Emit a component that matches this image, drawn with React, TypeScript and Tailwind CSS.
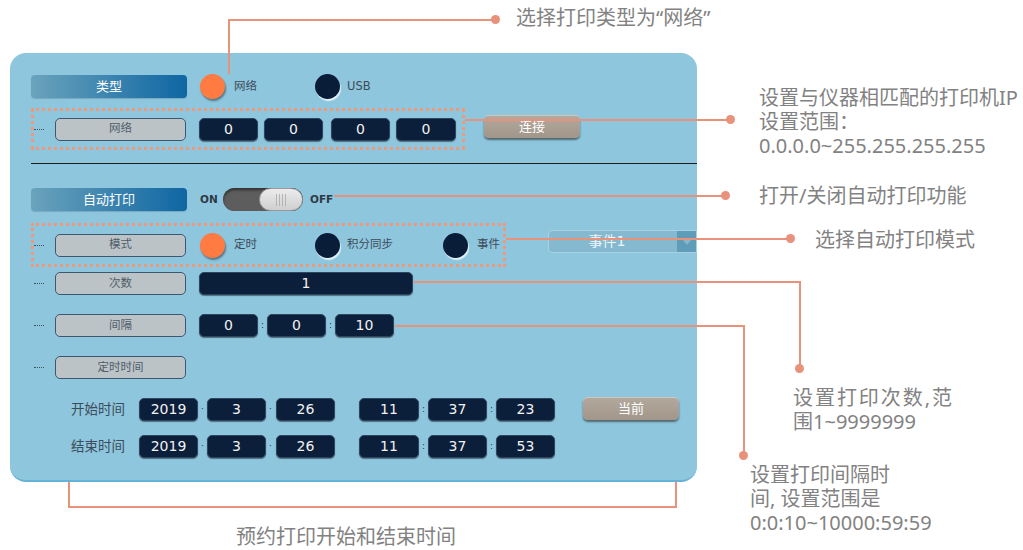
import React from "react";

const panelFont = "font-['DejaVu_Sans','Noto_Sans_CJK_SC',sans-serif]";
const noteFont = "font-['Noto_Sans','Noto_Sans_CJK_SC',sans-serif]";

function HeadPill({ children }: { children: React.ReactNode }) {
  return (
    <div className="w-[156px] h-[23px] rounded-[4px] bg-[linear-gradient(90deg,#6aa3bc,#0f66a3)] flex items-center justify-center text-white text-[13px] shadow-[0_1px_1px_rgba(0,0,0,0.15)]">
      {children}
    </div>
  );
}

function Pill({ children }: { children: React.ReactNode }) {
  return (
    <div className="w-[131px] h-[23px] shrink-0 rounded-[5px] bg-[#bcc3c7] border-[1.5px] border-[#3d5770] flex items-center justify-center text-[11.5px] text-[#4f5d6a]">
      {children}
    </div>
  );
}

function Dash() {
  return <div className="w-[10px] h-0 border-t border-dotted border-[#40505e] shrink-0" />;
}

function Box({ w, children }: { w: string; children: React.ReactNode }) {
  return (
    <div
      className={`${w} h-[23px] shrink-0 rounded-[5px] bg-[#0b1e3a] border border-[#2e4560] shadow-[0_1px_1px_rgba(0,0,0,0.45)] flex items-center justify-center text-[#f2f2f2] text-[14px]`}
    >
      {children}
    </div>
  );
}

function Orange() {
  return <div className="w-[25px] h-[25px] rounded-full bg-[#ff7b42] shrink-0 shadow-[1px_2px_2px_rgba(0,0,0,0.4)]" />;
}

function Navy() {
  return <div className="w-[25px] h-[25px] rounded-full bg-[#0a1d38] shrink-0 shadow-[1px_2px_1px_rgba(235,245,250,0.9)]" />;
}

function Taupe({ children }: { children: React.ReactNode }) {
  return (
    <div className="w-[96px] h-[23px] rounded-[5px] bg-[linear-gradient(180deg,#b3a89d,#a2968a)] border-t border-[#cfc6bc] shadow-[0_2px_2px_rgba(40,40,40,0.6)] flex items-center justify-center text-white text-[13px]">
      {children}
    </div>
  );
}

function Sep({ c }: { c: string }) {
  return (
    <div className="w-[9px] shrink-0 flex items-center justify-center text-[9px] text-[#23384d] leading-none">
      {c}
    </div>
  );
}

function DateRow({ label, s }: { label: string; s: string }) {
  return (
    <div className="flex items-center h-[24px]">
      <div className="ml-[40px] w-[68px] text-[13.5px] text-[#3c4c5a]">{label}</div>
      <Box w="w-[59px]">2019</Box>
      <Sep c="·" />
      <Box w="w-[59px]">3</Box>
      <Sep c="·" />
      <div className="w-[1px]" />
      <Box w="w-[59px]">26</Box>
      <div className="w-[24px]" />
      <Box w="w-[60px]">11</Box>
      <Sep c=":" />
      <Box w="w-[59px]">37</Box>
      <Sep c=":" />
      <Box w="w-[59px]">{s}</Box>
    </div>
  );
}

function Line({ className }: { className: string }) {
  return <div className={`absolute bg-[#e8917b] ${className}`} />;
}

function Dot({ className }: { className: string }) {
  return <div className={`absolute w-[9px] h-[9px] rounded-full bg-[#e8917b] ${className}`} />;
}

export default function App() {
  return (
    <div className="relative w-[1023px] h-[550px] bg-white overflow-hidden">
      <div className="pt-[53px] pl-[10px]">
        <div
          className={`${panelFont} w-[687px] h-[429px] rounded-[16px] bg-[#8ec6de] border-b-2 border-[#66b1d8] pl-[21px] pt-[22px] overflow-hidden`}
        >
          {/* Type row */}
          <div className="flex items-center h-[23px]">
            <HeadPill>类型</HeadPill>
            <div className="ml-[13px] w-[115px] flex items-center">
              <Orange />
              <span className="ml-[9px] text-[11.5px] text-[#3d4b58]">网络</span>
            </div>
            <Navy />
            <span className="ml-[7px] text-[11.5px] text-[#3d4b58]">USB</span>
          </div>

          {/* IP row */}
          <div className="flex items-center mt-[10px]">
            <div className="w-[434px] h-[42px] border-[3px] border-dotted border-[#f0987c] flex items-center">
              <Dash />
              <div className="ml-[11px]">
                <Pill>网络</Pill>
              </div>
              <div className="ml-[13px] flex items-center">
                <Box w="w-[59px]">0</Box>
                <div className="w-[6px]" />
                <Box w="w-[59px]">0</Box>
                <div className="w-[8px]" />
                <Box w="w-[59px]">0</Box>
                <div className="w-[6px]" />
                <Box w="w-[60px]">0</Box>
              </div>
            </div>
            <div className="ml-[19px] mb-[5px]">
              <Taupe>连接</Taupe>
            </div>
          </div>

          <div className="mt-[13px] w-[666px] h-[1px] bg-[#1c1c1c]" />

          {/* Auto print row */}
          <div className="flex items-center h-[23px] mt-[24px]">
            <HeadPill>自动打印</HeadPill>
            <div className="ml-[13px] w-[23px] text-[10.5px] font-bold text-[#2f3a44]">ON</div>
            <div className="relative w-[80px] h-[23px] rounded-full bg-[#5d5d5d] shadow-[inset_0_2px_3px_rgba(0,0,0,0.5)]">
              <div className="absolute right-0 top-0 w-[44px] h-[23px] rounded-full bg-[linear-gradient(180deg,#ececec,#cfcfcf)] border border-[#9a9a9a] flex items-center justify-center gap-[2px]">
                <div className="w-[1px] h-[12px] bg-[#b3b3b3]" />
                <div className="w-[1px] h-[12px] bg-[#b3b3b3]" />
                <div className="w-[1px] h-[12px] bg-[#b3b3b3]" />
                <div className="w-[1px] h-[12px] bg-[#b3b3b3]" />
              </div>
            </div>
            <div className="ml-[7px] text-[10.5px] font-bold text-[#2f3a44]">OFF</div>
          </div>

          {/* Mode row */}
          <div className="flex items-start mt-[12px]">
            <div className="w-[475px] h-[44px] border-[3px] border-dotted border-[#f0987c] flex items-center">
              <Dash />
              <div className="ml-[11px]">
                <Pill>模式</Pill>
              </div>
              <div className="ml-[14px] w-[115px] flex items-center">
                <Orange />
                <span className="ml-[9px] text-[11.5px] text-[#3d4b58]">定时</span>
              </div>
              <div className="w-[128px] flex items-center">
                <Navy />
                <span className="ml-[7px] text-[11.5px] text-[#3d4b58]">积分同步</span>
              </div>
              <Navy />
              <span className="ml-[9px] text-[11.5px] text-[#3d4b58]">事件</span>
            </div>
            <div className="ml-[42px] mt-[7px] w-[149px] h-[23px] rounded-l-[4px] border border-[#a8d2e3] bg-[#84b9d0] flex">
              <div className="flex-1 pr-[12px] flex items-center justify-center text-[14px] text-[#eef6fa]">事件1</div>
              <div className="w-[19px] bg-[#5e9cb7] flex items-center justify-center">
                <svg width="10" height="6" viewBox="0 0 10 6">
                  <path d="M0 0 L10 0 L5 6 Z" fill="#86b6cb" />
                </svg>
              </div>
            </div>
          </div>

          {/* Count */}
          <div className="flex items-center h-[23px] mt-[5px]">
            <div className="ml-[3px]">
              <Dash />
            </div>
            <div className="ml-[11px]">
              <Pill>次数</Pill>
            </div>
            <div className="ml-[13px]">
              <Box w="w-[214px]">1</Box>
            </div>
          </div>

          {/* Interval */}
          <div className="flex items-center h-[23px] mt-[19px]">
            <div className="ml-[3px]">
              <Dash />
            </div>
            <div className="ml-[11px]">
              <Pill>间隔</Pill>
            </div>
            <div className="ml-[13px] flex items-center">
              <Box w="w-[59px]">0</Box>
              <Sep c=":" />
              <Box w="w-[59px]">0</Box>
              <Sep c=":" />
              <Box w="w-[59px]">10</Box>
            </div>
          </div>

          {/* Timing */}
          <div className="flex items-center h-[23px] mt-[19px]">
            <div className="ml-[3px]">
              <Dash />
            </div>
            <div className="ml-[11px]">
              <Pill>定时时间</Pill>
            </div>
          </div>

          {/* Start */}
          <div className="flex items-center mt-[18px]">
            <DateRow label="开始时间" s="23" />
            <div className="ml-[28px] mb-[2px]">
              <Taupe>当前</Taupe>
            </div>
          </div>
          <div className="mt-[12px]">
            <DateRow label="结束时间" s="53" />
          </div>
        </div>
      </div>

      {/* Callouts */}
      <div className={`${noteFont} text-[20px] leading-[24px] text-[#828282]`}>
        <Line className="left-[228px] top-[19px] w-[2px] h-[55px]" />
        <Line className="left-[228px] top-[19px] w-[268px] h-[2px]" />
        <Dot className="left-[491px] top-[15px]" />
        <div className="absolute left-[516px] top-[6px] whitespace-nowrap">选择打印类型为“网络”</div>

        <Line className="left-[465px] top-[119px] w-[266px] h-[2px]" />
        <Dot className="left-[726px] top-[115px]" />
        <div className="absolute left-[759px] top-[86px] whitespace-nowrap">
          <div>设置与仪器相匹配的打印机IP</div>
          <div>设置范围：</div>
          <div>0.0.0.0~255.255.255.255</div>
        </div>

        <Line className="left-[334px] top-[195px] w-[392px] h-[2px]" />
        <Dot className="left-[721px] top-[191px]" />
        <div className="absolute left-[759px] top-[184px] whitespace-nowrap">打开/关闭自动打印功能</div>

        <Line className="left-[506px] top-[238px] w-[285px] h-[2px]" />
        <Dot className="left-[786px] top-[234px]" />
        <div className="absolute left-[815px] top-[228px] whitespace-nowrap">选择自动打印模式</div>

        <Line className="left-[414px] top-[281px] w-[387px] h-[2px]" />
        <Line className="left-[799px] top-[281px] w-[2px] h-[88px]" />
        <Dot className="left-[795px] top-[364px]" />
        <div className="absolute left-[793px] top-[386px] whitespace-nowrap">
          <div className="w-[159px] text-justify [text-align-last:justify]">设置打印次数,范</div>
          <div>围1~9999999</div>
        </div>

        <Line className="left-[395px] top-[325px] w-[350px] h-[2px]" />
        <Line className="left-[743px] top-[325px] w-[2px] h-[131px]" />
        <Dot className="left-[739px] top-[451px]" />
        <div className="absolute left-[750px] top-[463px] whitespace-nowrap">
          <div>设置打印间隔时</div>
          <div>间, 设置范围是</div>
          <div>0:0:10~10000:59:59</div>
        </div>

        <Line className="left-[68px] top-[482px] w-[2px] h-[26px]" />
        <Line className="left-[68px] top-[506px] w-[609px] h-[2px]" />
        <Line className="left-[675px] top-[482px] w-[2px] h-[26px]" />
        <div className="absolute left-[236px] top-[527px] leading-[20px] whitespace-nowrap">预约打印开始和结束时间</div>
      </div>
    </div>
  );
}
